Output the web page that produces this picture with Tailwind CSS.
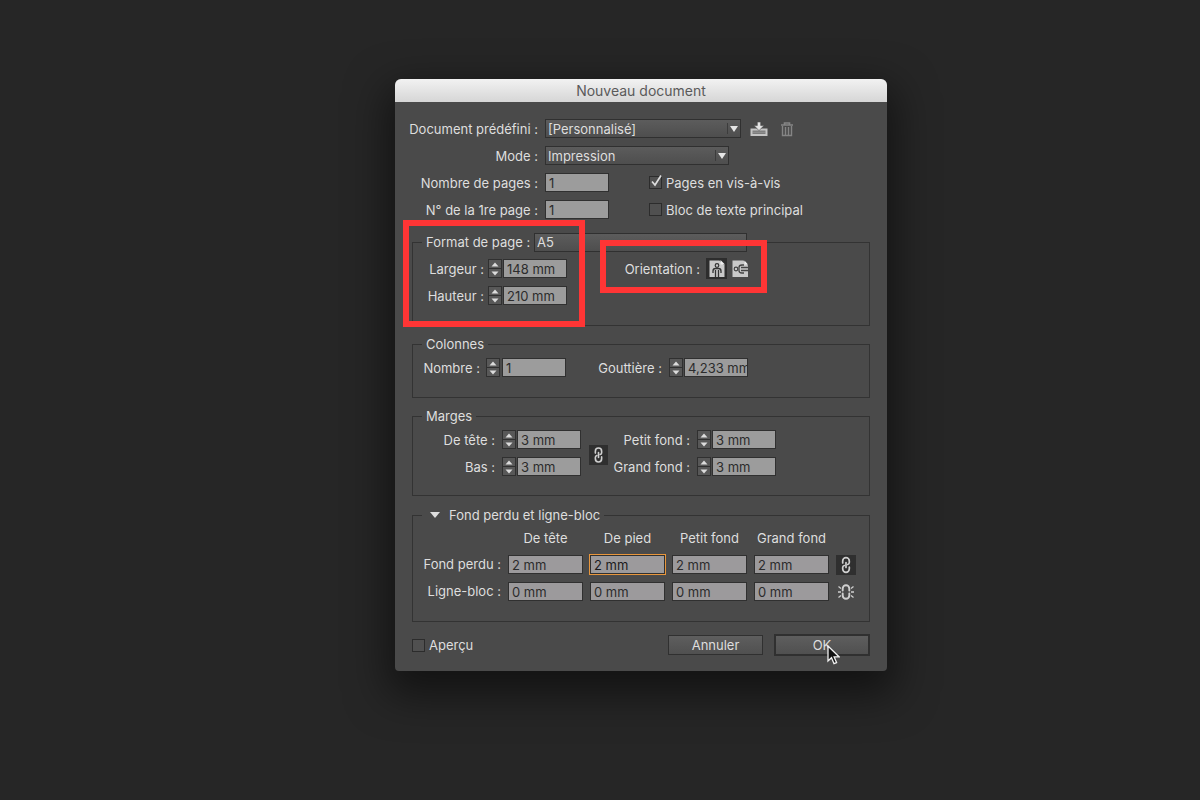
<!DOCTYPE html>
<html lang="fr">
<head>
<meta charset="utf-8">
<meta name="viewport" content="width=device-width, initial-scale=1">
<title>Nouveau document</title>
<script src="https://cdn.jsdelivr.net/npm/@tailwindcss/browser@4"></script>
</head>
<body class="bg-[#262626] font-['Inter','Liberation_Sans',sans-serif] text-[13px] leading-5 text-[#dedede]">
<svg class="hidden" aria-hidden="true">
  <symbol id="arrow" viewBox="0 0 10 8"><path d="M1 1h8L5 7z" fill="#e6e6e6"/></symbol>
  <symbol id="up" viewBox="0 0 8 5"><path d="M0.5 4.5h7L4 0.5z" fill="#dcdcdc"/></symbol>
  <symbol id="down" viewBox="0 0 8 5"><path d="M0.5 0.5h7L4 4.5z" fill="#dcdcdc"/></symbol>
  <symbol id="chain" viewBox="0 0 20 20"><g fill="none" stroke="#cfcfcf" stroke-width="1.7" stroke-linecap="round"><path d="M6.700 8V6a3.300 3.300 0 0 1 6.600 0v1.500c0 1-.6 1.700-1.600 2M13.300 12v2a3.300 3.300 0 0 1-6.600 0v-1.500c0-1 .6-1.700 1.600-2"/><path d="M10 7.500v5"/></g></symbol>
</svg>

<main class="flex min-h-screen items-start justify-center pt-[79px] pl-[82px]">
  <form class="w-full max-w-[492px] rounded-t-md rounded-b-sm bg-[#4a4a4a] shadow-[0_16px_40px_8px_rgba(0,0,0,0.5)]" onsubmit="return false">
    <h1 class="h-[23px] rounded-t-md bg-linear-to-b from-[#f2f2f2] to-[#d6d6d6] text-center text-sm leading-6 text-[#5a5a5a]">Nouveau document</h1>

    <div class="px-[17px] pt-[13px] pb-3">
      <div class="flex h-[27px] items-center">
        <label for="preset" class="flex w-[126px] justify-end whitespace-nowrap">Document prédéfini :</label>
        <div class="relative ml-[7px] w-[196px]">
          <select id="preset" class="block h-[19px] w-full appearance-none border border-[#303030] bg-linear-to-b from-[#5c5c5c] to-[#4e4e4e] pl-[2px] leading-4"><option>[Personnalisé]</option></select>
          <span class="pointer-events-none absolute inset-y-1 right-[13px] border-l border-[#3c3c3c]"></span>
          <svg class="pointer-events-none absolute top-[6px] right-[2px] h-2 w-[10px]"><use href="#arrow"/></svg>
        </div>
        <button type="button" aria-label="Enregistrer" class="ml-[9px] h-4 w-[18px]">
          <svg viewBox="0 0 18 16" class="h-4 w-[18px]"><path d="M0.500 7.500h17V15H.5z" fill="#c4c4c4"/><path d="M2.500 9.500h13v3.500h-13z" fill="#7c7c7c"/><path d="M2.500 11.300h13" stroke="#a8a8a8" stroke-dasharray="1 1"/><path d="M7.300 1h3.400v3.600h3.300L9 9.600 4 4.600h3.300z" fill="#e4e4e4" stroke="#4a4a4a" stroke-width=".6"/></svg>
        </button>
        <button type="button" aria-label="Supprimer" class="ml-3 h-4 w-[14px]">
          <svg viewBox="0 0 14 16" class="h-4 w-[14px]" fill="none" stroke="#858585"><path d="M1 4h12M4.500 3.500V2h5v1.500" stroke-width="1.600"/><path d="M2.500 5v9.500h9V5M5.500 6v8M8.500 6v8" stroke-width="1.400"/></svg>
        </button>
      </div>
      <div class="flex h-[27px] items-center">
        <label for="mode" class="w-[126px] text-right">Mode :</label>
        <div class="relative ml-[7px] w-[184px]">
          <select id="mode" class="block h-[19px] w-full appearance-none border border-[#303030] bg-linear-to-b from-[#5c5c5c] to-[#4e4e4e] pl-[2px] leading-4"><option>Impression</option></select>
          <span class="pointer-events-none absolute inset-y-1 right-[13px] border-l border-[#3c3c3c]"></span>
          <svg class="pointer-events-none absolute top-[6px] right-[2px] h-2 w-[10px]"><use href="#arrow"/></svg>
        </div>
      </div>
      <div class="flex h-[27px] items-center">
        <label for="pages" class="w-[126px] text-right">Nombre de pages :</label>
        <input id="pages" value="1" class="ml-[7px] h-[19px] w-16 border border-[#303030] bg-[#9c9c9c] pl-[3px] text-[#2c2c2c]">
        <label class="ml-10 flex items-center gap-1">
          <span class="relative size-[13px]">
            <input type="checkbox" checked class="block size-[13px] appearance-none border border-[#2c2c2c] bg-[#505050]">
            <svg viewBox="0 0 14 14" class="pointer-events-none absolute -top-[2px] left-0 size-[14px]"><path d="M3 7.500l3 3.500 6-9.500" fill="none" stroke="#dcdcdc" stroke-width="1.700"/></svg>
          </span>
          Pages en vis-à-vis
        </label>
      </div>
      <div class="flex h-[27px] items-center">
        <label for="first" class="w-[126px] text-right">N° de la 1re page :</label>
        <input id="first" value="1" class="ml-[7px] h-[19px] w-16 border border-[#303030] bg-[#9c9c9c] pl-[3px] text-[#2c2c2c]">
        <label class="ml-10 flex items-center gap-1">
          <input type="checkbox" class="block size-[13px] appearance-none border border-[#2c2c2c] bg-[#505050]">
          Bloc de texte principal
        </label>
      </div>

      <div class="relative mt-[9px]">
        <fieldset class="border border-[#333] pt-[3px] pb-4">
          <legend class="ml-[9px] flex h-5 items-center px-1">
            <label for="format" class="w-[102px] whitespace-nowrap">Format de page :</label>
            <span class="relative ml-[6px] w-[213px]">
              <select id="format" class="block h-[19px] w-full appearance-none border border-[#303030] bg-linear-to-b from-[#5c5c5c] to-[#4e4e4e] pl-[2px] leading-4"><option>A5</option></select>
              <svg class="pointer-events-none absolute top-[6px] right-[2px] h-2 w-[10px] opacity-30"><use href="#arrow"/></svg>
            </span>
          </legend>
          <div class="flex">
            <div>
              <div class="flex h-[27px] items-center">
                <label for="width" class="w-[71px] text-right">Largeur :</label>
                <span class="mr-px ml-1 flex h-[19px] w-[14px] flex-col border border-[#303030] bg-[#585858]">
                  <button type="button" aria-label="Augmenter" class="flex flex-1 items-center justify-center border-b border-[#303030]"><svg class="h-[5px] w-2"><use href="#up"/></svg></button>
                  <button type="button" aria-label="Diminuer" class="flex flex-1 items-center justify-center"><svg class="h-[5px] w-2"><use href="#down"/></svg></button>
                </span>
                <input id="width" value="148 mm" class="h-[19px] w-16 border border-[#303030] bg-[#9c9c9c] pl-[3px] text-[#2c2c2c]">
              </div>
              <div class="flex h-[27px] items-center">
                <label for="height" class="w-[71px] text-right">Hauteur :</label>
                <span class="mr-px ml-1 flex h-[19px] w-[14px] flex-col border border-[#303030] bg-[#585858]">
                  <button type="button" aria-label="Augmenter" class="flex flex-1 items-center justify-center border-b border-[#303030]"><svg class="h-[5px] w-2"><use href="#up"/></svg></button>
                  <button type="button" aria-label="Diminuer" class="flex flex-1 items-center justify-center"><svg class="h-[5px] w-2"><use href="#down"/></svg></button>
                </span>
                <input id="height" value="210 mm" class="h-[19px] w-16 border border-[#303030] bg-[#9c9c9c] pl-[3px] text-[#2c2c2c]">
              </div>
            </div>
            <div class="flex h-[27px] items-center">
              <span class="w-[133px] text-right">Orientation :</span>
              <button type="button" aria-label="Portrait" class="ml-[6px] size-[21px] bg-[#2d2d2d]">
                <svg viewBox="0 0 21 21" class="size-[21px]"><path d="M3.500 2.500h10l5 5V19h-15z" fill="#c9c9c9"/><path d="M14.500 2v4.500H19z" fill="#eee"/><circle cx="11" cy="7.500" r="1.800" fill="#c9c9c9" stroke="#333" stroke-width="1.200"/><path d="M7 15v-2q0-2.500 2.500-2.500h3q2.500 0 2.500 2.500v2M9.500 12v7M12.500 12v7" fill="none" stroke="#333" stroke-width="1.300"/></svg>
              </button>
              <button type="button" aria-label="Paysage" class="ml-[3px] size-[21px]">
                <svg viewBox="0 0 21 21" class="size-[21px]"><path d="M2.500 2.500h11l4.500 5V19H2.500z" fill="#c9c9c9"/><path d="M14.500 2.500v4H18z" fill="#eee"/><circle cx="6" cy="11" r="1.800" fill="#c9c9c9" stroke="#444" stroke-width="1.200"/><path d="M14 7h-2q-3 0-3 2.500v3q0 2.500 3 2.500h2M11 9.500h7M11 12.500h7" fill="none" stroke="#444" stroke-width="1.300"/></svg>
              </button>
            </div>
          </div>
        </fieldset>
        <span class="pointer-events-none absolute -top-3 -left-[9px] h-[107px] w-[182px] border-6 border-[#ff3535]"></span>
        <span class="pointer-events-none absolute top-2 left-[188px] h-[53px] w-[167px] border-6 border-[#ff3535]"></span>
      </div>

      <fieldset class="mt-2 border border-[#333] pb-4">
        <legend class="ml-[9px] h-5 px-1">Colonnes</legend>
        <div class="flex h-[27px] items-center">
          <label for="cols" class="w-[67px] text-right">Nombre :</label>
          <span class="mr-[2px] ml-[6px] flex h-[19px] w-[14px] flex-col border border-[#303030] bg-[#585858]">
            <button type="button" aria-label="Augmenter" class="flex flex-1 items-center justify-center border-b border-[#303030]"><svg class="h-[5px] w-2"><use href="#up"/></svg></button>
            <button type="button" aria-label="Diminuer" class="flex flex-1 items-center justify-center"><svg class="h-[5px] w-2"><use href="#down"/></svg></button>
          </span>
          <input id="cols" value="1" class="h-[19px] w-16 border border-[#303030] bg-[#9c9c9c] pl-[3px] text-[#2c2c2c]">
          <label for="gutter" class="w-24 text-right">Gouttière :</label>
          <span class="mr-px ml-[7px] flex h-[19px] w-[14px] flex-col border border-[#303030] bg-[#585858]">
            <button type="button" aria-label="Augmenter" class="flex flex-1 items-center justify-center border-b border-[#303030]"><svg class="h-[5px] w-2"><use href="#up"/></svg></button>
            <button type="button" aria-label="Diminuer" class="flex flex-1 items-center justify-center"><svg class="h-[5px] w-2"><use href="#down"/></svg></button>
          </span>
          <input id="gutter" value="4,233 mm" class="h-[19px] w-16 border border-[#303030] bg-[#9c9c9c] pl-[3px] text-[#2c2c2c]">
        </div>
      </fieldset>

      <fieldset class="mt-2 border border-[#333] pb-[15px]">
        <legend class="ml-[9px] h-5 px-1">Marges</legend>
        <div class="flex items-center">
          <div>
            <div class="flex h-[27px] items-center">
              <label for="mtop" class="w-[82px] text-right">De tête :</label>
              <span class="mr-px ml-[7px] flex h-[19px] w-[14px] flex-col border border-[#303030] bg-[#585858]">
                <button type="button" aria-label="Augmenter" class="flex flex-1 items-center justify-center border-b border-[#303030]"><svg class="h-[5px] w-2"><use href="#up"/></svg></button>
                <button type="button" aria-label="Diminuer" class="flex flex-1 items-center justify-center"><svg class="h-[5px] w-2"><use href="#down"/></svg></button>
              </span>
              <input id="mtop" value="3 mm" class="h-[19px] w-16 border border-[#303030] bg-[#9c9c9c] pl-[3px] text-[#2c2c2c]">
            </div>
            <div class="flex h-[27px] items-center">
              <label for="mbottom" class="w-[82px] text-right">Bas :</label>
              <span class="mr-px ml-[7px] flex h-[19px] w-[14px] flex-col border border-[#303030] bg-[#585858]">
                <button type="button" aria-label="Augmenter" class="flex flex-1 items-center justify-center border-b border-[#303030]"><svg class="h-[5px] w-2"><use href="#up"/></svg></button>
                <button type="button" aria-label="Diminuer" class="flex flex-1 items-center justify-center"><svg class="h-[5px] w-2"><use href="#down"/></svg></button>
              </span>
              <input id="mbottom" value="3 mm" class="h-[19px] w-16 border border-[#303030] bg-[#9c9c9c] pl-[3px] text-[#2c2c2c]">
            </div>
          </div>
          <button type="button" aria-label="Lier les marges" class="mt-1 ml-2 h-5 w-[19px] bg-[#2f2f2f]"><svg class="h-5 w-[19px]"><use href="#chain"/></svg></button>
          <div>
            <div class="flex h-[27px] items-center">
              <label for="min" class="w-[82px] text-right">Petit fond :</label>
              <span class="mr-px ml-[7px] flex h-[19px] w-[14px] flex-col border border-[#303030] bg-[#585858]">
                <button type="button" aria-label="Augmenter" class="flex flex-1 items-center justify-center border-b border-[#303030]"><svg class="h-[5px] w-2"><use href="#up"/></svg></button>
                <button type="button" aria-label="Diminuer" class="flex flex-1 items-center justify-center"><svg class="h-[5px] w-2"><use href="#down"/></svg></button>
              </span>
              <input id="min" value="3 mm" class="h-[19px] w-16 border border-[#303030] bg-[#9c9c9c] pl-[3px] text-[#2c2c2c]">
            </div>
            <div class="flex h-[27px] items-center">
              <label for="mout" class="w-[82px] text-right">Grand fond :</label>
              <span class="mr-px ml-[7px] flex h-[19px] w-[14px] flex-col border border-[#303030] bg-[#585858]">
                <button type="button" aria-label="Augmenter" class="flex flex-1 items-center justify-center border-b border-[#303030]"><svg class="h-[5px] w-2"><use href="#up"/></svg></button>
                <button type="button" aria-label="Diminuer" class="flex flex-1 items-center justify-center"><svg class="h-[5px] w-2"><use href="#down"/></svg></button>
              </span>
              <input id="mout" value="3 mm" class="h-[19px] w-16 border border-[#303030] bg-[#9c9c9c] pl-[3px] text-[#2c2c2c]">
            </div>
          </div>
        </div>
      </fieldset>

      <fieldset class="mt-[9px] border border-[#333] pb-4">
        <legend class="ml-[9px] h-5 px-1">
          <button type="button" aria-expanded="true" class="flex h-5 items-center gap-[9px] pl-1"><svg viewBox="0 0 10 6" class="h-[6px] w-[10px]"><path d="M0 0h10L5 6z" fill="#dedede"/></svg>Fond perdu et ligne-bloc</button>
        </legend>
        <div class="grid grid-cols-[88px_75px_75px_75px_75px_20px] items-center gap-x-[7px]">
          <span></span>
          <span class="h-[26px] text-center leading-[26px]">De tête</span>
          <span class="h-[26px] text-center leading-[26px]">De pied</span>
          <span class="h-[26px] text-center leading-[26px]">Petit fond</span>
          <span class="h-[26px] text-center leading-[26px]">Grand fond</span>
          <span></span>

          <span class="h-[27px] text-right leading-[27px] whitespace-nowrap">Fond perdu :</span>
          <input aria-label="Fond perdu, de tête" value="2 mm" class="h-[19px] w-full border border-[#303030] bg-[#9c9a9c] pl-[3px] text-[#2c2c2c]">
          <input aria-label="Fond perdu, de pied" value="2 mm" class="h-[19px] w-full border border-[#303030] bg-[#9c9a9c] pl-[3px] text-[#1c1c1c] outline outline-[#e8963c]">
          <input aria-label="Fond perdu, petit fond" value="2 mm" class="h-[19px] w-full border border-[#303030] bg-[#9c9a9c] pl-[3px] text-[#2c2c2c]">
          <input aria-label="Fond perdu, grand fond" value="2 mm" class="h-[19px] w-full border border-[#303030] bg-[#9c9a9c] pl-[3px] text-[#2c2c2c]">
          <button type="button" aria-label="Lier le fond perdu" class="h-5 w-5 bg-[#2f2f2f]"><svg class="size-5"><use href="#chain"/></svg></button>

          <span class="h-[27px] text-right leading-[27px] whitespace-nowrap">Ligne-bloc :</span>
          <input aria-label="Ligne-bloc, de tête" value="0 mm" class="h-[19px] w-full border border-[#303030] bg-[#9c9a9c] pl-[3px] text-[#2c2c2c]">
          <input aria-label="Ligne-bloc, de pied" value="0 mm" class="h-[19px] w-full border border-[#303030] bg-[#9c9a9c] pl-[3px] text-[#2c2c2c]">
          <input aria-label="Ligne-bloc, petit fond" value="0 mm" class="h-[19px] w-full border border-[#303030] bg-[#9c9a9c] pl-[3px] text-[#2c2c2c]">
          <input aria-label="Ligne-bloc, grand fond" value="0 mm" class="h-[19px] w-full border border-[#303030] bg-[#9c9a9c] pl-[3px] text-[#2c2c2c]">
          <button type="button" aria-label="Lier la ligne-bloc" class="size-5"><svg viewBox="0 0 20 20" class="size-5" fill="none" stroke="#cfcfcf"><path d="M6.700 8.500V6.500a3.300 3.300 0 0 1 6.600 0v2M6.700 11.500v2a3.300 3.300 0 0 0 6.600 0v-2" stroke-width="1.900" stroke-linecap="round"/><path d="M2 10h3M15 10h3M2.500 4.500l2.500 2M17.500 4.500l-2.500 2M2.500 15.500l2.500-2M17.500 15.500l-2.500-2" stroke-width="1.300"/></svg></button>
        </div>
      </fieldset>

      <div class="mt-[9px] flex h-[28px] items-center">
        <label class="mr-auto flex items-center gap-1">
          <input type="checkbox" class="block size-[13px] appearance-none border border-[#2c2c2c] bg-[#505050]">
          Aperçu
        </label>
        <button type="button" class="h-5 w-[95px] border border-[#303030] bg-linear-to-b from-[#5e5e5e] to-[#505050] leading-[18px]">Annuler</button>
        <button type="submit" class="relative ml-[11px] h-[22px] w-24 border-2 border-[#303030] bg-linear-to-b from-[#5e5e5e] to-[#505050] leading-[18px]">OK
          <svg viewBox="0 0 13 20" class="pointer-events-none absolute top-[9px] left-[51px] h-5 w-[13px]"><path d="M1 1v15l3.500-3.300 2.500 6 2.600-1.100-2.500-5.800H12z" fill="#111" stroke="#f2f2f2" stroke-width="1.300"/></svg>
        </button>
      </div>
    </div>
  </form>
</main>
</body>
</html>
